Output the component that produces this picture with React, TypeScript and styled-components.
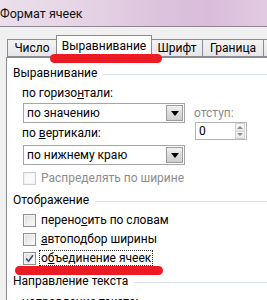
import styled, { createGlobalStyle } from 'styled-components'

const GlobalStyle = createGlobalStyle`
  html, body {
    margin: 0;
    padding: 0;
    overflow: hidden;
    background: #f0f0f0;
  }
`

const Dialog = styled.div`
  position: relative;
  width: 267px;
  height: 300px;
  overflow: hidden;
  background: #f0f0f0;
  font-family: Roboto, 'Noto Sans', sans-serif;
  font-size: 12px;
  color: #000;
  display: flex;
  flex-direction: column;
`

const TitleBar = styled.div`
  height: 26px;
  flex: none;
  display: flex;
  align-items: center;
  border-bottom: 1px solid #8d8590;
  background: linear-gradient(
    90deg,
    #ebdfeb 0%,
    #e4d2e4 35%,
    #dcc3dc 60%,
    #d9bcd9 78%,
    #e2cbe2 100%
  );
  font-size: 12.5px;
  color: #111;
`

const Body = styled.div`
  flex: 1;
  display: flex;
  flex-direction: column;
  padding: 8px 0 0 6px;
  min-height: 0;
`

const TabStrip = styled.div`
  display: flex;
  align-items: flex-end;
  height: 22px;
  padding-left: 1px;
  flex: none;
  position: relative;
  z-index: 1;
`

const Tab = styled.div<{ $active?: boolean; $w: number }>`
  box-sizing: border-box;
  width: ${(p) => p.$w}px;
  flex: none;
  height: ${(p) => (p.$active ? 23 : 18)}px;
  margin-bottom: ${(p) => (p.$active ? -1 : 0)}px;
  border: 1px solid #898c95;
  border-bottom: ${(p) => (p.$active ? 'none' : '1px solid #898c95')};
  margin-right: -1px;
  display: flex;
  align-items: center;
  justify-content: center;
  padding-bottom: ${(p) => (p.$active ? 3 : 0)}px;
  background: ${(p) =>
    p.$active ? '#fff' : 'linear-gradient(#f3f3f3, #e6e6e6)'};
  white-space: nowrap;
  position: relative;
  z-index: ${(p) => (p.$active ? 2 : 1)};
`

const Panel = styled.div`
  flex: 1;
  background: #fff;
  border-top: 1px solid #898c95;
  border-left: 1px solid #898c95;
  padding: 0 0 0 6px;
  display: flex;
  flex-direction: column;
`

const GroupHeader = styled.div<{ $mt: number }>`
  display: flex;
  align-items: center;
  height: 16px;
  margin-top: ${(p) => p.$mt}px;
  white-space: nowrap;
  &::after {
    content: '';
    flex: 1;
    height: 1px;
    margin-left: 6px;
    margin-top: 2px;
    background: #d5dfe5;
  }
`

const AlignBlock = styled.div`
  display: flex;
  margin-top: 4px;
  margin-left: 9px;
`

const Column = styled.div`
  display: flex;
  flex-direction: column;
`

const FieldLabel = styled.div<{ $mt?: number; $ml?: number; $muted?: boolean }>`
  height: 16px;
  line-height: 16px;
  margin-top: ${(p) => p.$mt ?? 0}px;
  margin-left: ${(p) => p.$ml ?? 0}px;
  color: ${(p) => (p.$muted ? '#8c8c8c' : '#000')};
  white-space: nowrap;
`

const Combo = styled.div<{ $mt: number }>`
  box-sizing: border-box;
  width: 162px;
  height: 20px;
  margin-top: ${(p) => p.$mt}px;
  margin-left: 1px;
  border: 1px solid #a5a5a5;
  display: flex;
  align-items: stretch;
  background: #fff;
`

const ComboText = styled.div`
  flex: 1;
  padding-left: 3px;
  line-height: 18px;
  white-space: nowrap;
`

const ComboButton = styled.div`
  width: 15px;
  margin: 1px;
  border: 1px solid #9c9c9c;
  background: linear-gradient(#f2f2f2, #dcdcdc 50%, #cfcfcf);
  display: flex;
  align-items: center;
  justify-content: center;
  &::before {
    content: '';
    border-left: 4px solid transparent;
    border-right: 4px solid transparent;
    border-top: 5px solid #000;
    margin-top: 1px;
  }
`

const IndentColumn = styled.div`
  display: flex;
  flex-direction: column;
  margin-left: 9px;
  padding-top: 20px;
`

const Spinner = styled.div`
  box-sizing: border-box;
  width: 52px;
  height: 18px;
  margin-top: 1px;
  margin-left: 1px;
  border: 1px solid #b5b5b5;
  display: flex;
  background: #fff;
`

const SpinValue = styled.div`
  flex: 1;
  padding-left: 3px;
  line-height: 16px;
`

const SpinButtons = styled.div`
  width: 10px;
  margin: 0 1px 0 0;
  display: flex;
  flex-direction: column;
`

const SpinButton = styled.div<{ $down?: boolean }>`
  flex: 1;
  border: 1px solid #d0d0d0;
  margin-top: ${(p) => (p.$down ? -1 : 0)}px;
  background: linear-gradient(#fafafa, #e8e8e8);
  display: flex;
  align-items: center;
  justify-content: center;
  &::before {
    content: '';
    border-left: 3px solid transparent;
    border-right: 3px solid transparent;
    ${(p) =>
      p.$down
        ? 'border-top: 3px solid #8a8a8a;'
        : 'border-bottom: 3px solid #8a8a8a;'}
  }
`

const CheckRow = styled.div<{ $mt: number; $disabled?: boolean }>`
  display: flex;
  align-items: center;
  height: 16px;
  margin-top: ${(p) => p.$mt}px;
  margin-left: 10px;
  color: ${(p) => (p.$disabled ? '#8c8c8c' : '#000')};
  white-space: nowrap;
`

const Box = styled.span<{ $disabled?: boolean }>`
  box-sizing: border-box;
  width: 13px;
  height: 13px;
  flex: none;
  border: 1px solid ${(p) => (p.$disabled ? '#cfcfcf' : '#8e8f8f')};
  background: ${(p) =>
    p.$disabled
      ? '#fafafa'
      : 'linear-gradient(135deg, #dcdcdc, #f2f2f2 70%, #fbfbfb)'};
  box-shadow: inset 0 0 0 1px ${(p) => (p.$disabled ? '#f2f2f2' : '#f4f4f4')};
  display: flex;
  align-items: center;
  justify-content: center;
  margin-right: 4px;
`

const CheckText = styled.span<{ $focus?: boolean }>`
  line-height: 14px;
  padding: 0 1px;
  margin-left: -1px;
  border: 1px ${(p) => (p.$focus ? 'dotted #333' : 'solid transparent')};
`

const Marker = styled.div<{ $x: number; $y: number; $w: number }>`
  position: absolute;
  left: ${(p) => p.$x}px;
  top: ${(p) => p.$y}px;
  width: ${(p) => p.$w}px;
  height: 9px;
  border-radius: 5px;
  background: #ec1b23;
  filter: blur(0.7px);
  z-index: 5;
`

function App() {
  return (
    <Dialog>
      <GlobalStyle />
      <TitleBar>Формат ячеек</TitleBar>
      <Body>
        <TabStrip>
          <Tab $w={50}>Число</Tab>
          <Tab $active $w={96}>
            Выравнивание
          </Tab>
          <Tab $w={52}>Шрифт</Tab>
          <Tab $w={62}>Граница</Tab>
          <Tab $w={60} />
        </TabStrip>
        <Panel>
          <GroupHeader $mt={7}>Выравнивание</GroupHeader>
          <AlignBlock>
            <Column>
              <FieldLabel>
                по горизо<u>н</u>тали:
              </FieldLabel>
              <Combo $mt={2}>
                <ComboText>по значению</ComboText>
                <ComboButton />
              </Combo>
              <FieldLabel $mt={2}>
                по <u>в</u>ертикали:
              </FieldLabel>
              <Combo $mt={4}>
                <ComboText>по нижнему краю</ComboText>
                <ComboButton />
              </Combo>
            </Column>
            <IndentColumn>
              <FieldLabel $muted>отступ:</FieldLabel>
              <Spinner>
                <SpinValue>0</SpinValue>
                <SpinButtons>
                  <SpinButton />
                  <SpinButton $down />
                </SpinButtons>
              </Spinner>
            </IndentColumn>
          </AlignBlock>
          <CheckRow $mt={5} $disabled>
            <Box $disabled />
            <CheckText>Распределять по ширине</CheckText>
          </CheckRow>
          <GroupHeader $mt={6}>Отображение</GroupHeader>
          <CheckRow $mt={4}>
            <Box />
            <CheckText>
              перено<u>с</u>ить по словам
            </CheckText>
          </CheckRow>
          <CheckRow $mt={3}>
            <Box />
            <CheckText>
              <u>а</u>втоподбор ширины
            </CheckText>
          </CheckRow>
          <CheckRow $mt={3}>
            <Box>
              <svg width="9" height="9" viewBox="0 0 9 9">
                <path
                  d="M1 4.5 L3.5 7.2 L8 1.2"
                  fill="none"
                  stroke="#3a4f7a"
                  strokeWidth="1.6"
                />
              </svg>
            </Box>
            <CheckText $focus>
              о<u>б</u>ъединение ячеек
            </CheckText>
          </CheckRow>
          <GroupHeader $mt={7}>Направление текста</GroupHeader>
          <FieldLabel $mt={5} $ml={9}>
            направление текста:
          </FieldLabel>
        </Panel>
      </Body>
      <Marker $x={50} $y={54} $w={112} />
      <Marker $x={15} $y={266} $w={148} />
    </Dialog>
  )
}

export default App
